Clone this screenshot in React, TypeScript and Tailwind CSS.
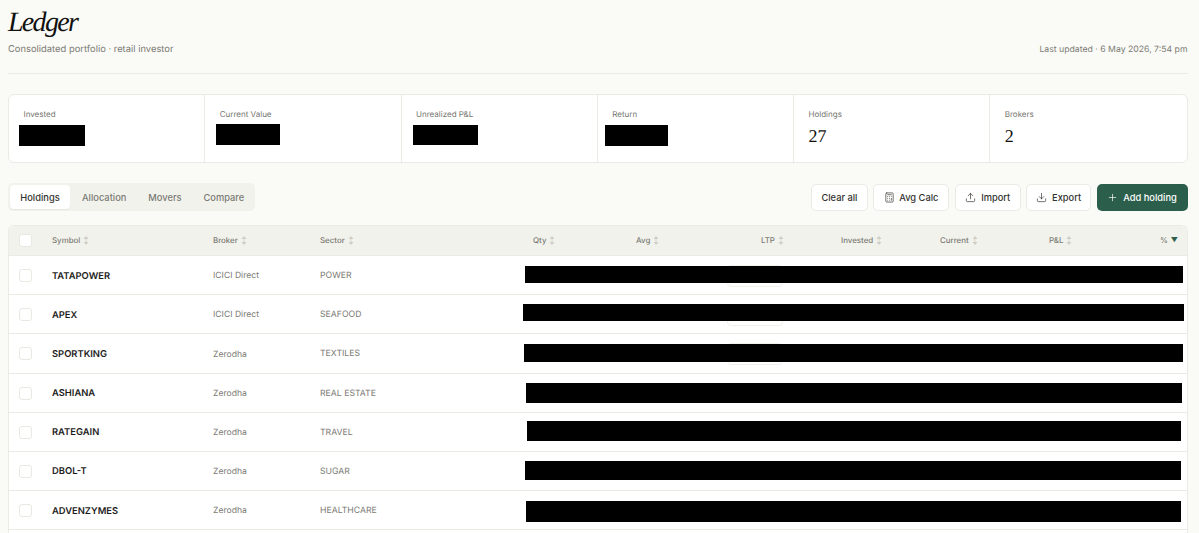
import { Calculator, Download, Plus, Upload } from "lucide-react";

const stats = [
  { label: "Invested", bar: "ml-[-4.5px] mt-[5px] w-[66px] h-[21px]" },
  { label: "Current Value", bar: "ml-[-4px] mt-[4px] w-[64px] h-[21px]" },
  { label: "Unrealized P&L", bar: "ml-[-3.5px] mt-[5px] w-[65px] h-[20px]" },
  { label: "Return", bar: "ml-[-7.5px] mt-[5px] w-[63px] h-[21px]" },
];

const columns = [
  { label: "Symbol", width: "w-[161px]" },
  { label: "Broker", width: "w-[107px]" },
  { label: "Sector", width: "w-[213px]" },
  { label: "Qty", width: "w-[103px]" },
  { label: "Avg", width: "w-[125px]" },
  { label: "LTP", width: "w-[80px]" },
  { label: "Invested", width: "w-[99px]" },
  { label: "Current", width: "w-[109px]" },
  { label: "P&L", width: "w-[90px]" },
];

const rows = [
  { symbol: "TATAPOWER", broker: "ICICI Direct", sector: "POWER", pill: true, bar: "ml-[-8px] w-[658px] h-[17px] mt-[-4px]" },
  { symbol: "APEX", broker: "ICICI Direct", sector: "SEAFOOD", pill: true, bar: "ml-[-10px] w-[661px] h-[17px] mt-[-6px]" },
  { symbol: "SPORTKING", broker: "Zerodha", sector: "TEXTILES", pill: true, bar: "ml-[-9px] w-[659px] h-[18px] mt-[-4px]" },
  { symbol: "ASHIANA", broker: "Zerodha", sector: "REAL ESTATE", pill: false, bar: "ml-[-7px] w-[656px] h-[20px] mt-[-2px]" },
  { symbol: "RATEGAIN", broker: "Zerodha", sector: "TRAVEL", pill: false, bar: "ml-[-6px] w-[654px] h-[20px] mt-[-5px]" },
  { symbol: "DBOL-T", broker: "Zerodha", sector: "SUGAR", pill: false, bar: "ml-[-8px] w-[656px] h-[19px] mt-[-4px]" },
  { symbol: "ADVENZYMES", broker: "Zerodha", sector: "HEALTHCARE", pill: false, bar: "ml-[-7px] w-[655px] h-[21px]" },
];

const tabs = ["Allocation", "Movers", "Compare"];

function Checkbox() {
  return <span className="block w-[13px] h-[13px] rounded-[3px] border border-[#e9e9e3] bg-white" />;
}

function SortIcon() {
  return (
    <svg width="6" height="9" viewBox="0 0 6 9" className="text-[#cfcfc8]" fill="currentColor">
      <path d="M3 0 L5.5 3 H0.5 Z" />
      <path d="M3 9 L0.5 6 H5.5 Z" />
      <rect x="2.6" y="2.5" width="0.8" height="4" />
    </svg>
  );
}

export default function App() {
  return (
    <div className="h-[533px] overflow-hidden bg-[#fafaf6] pl-[8px] pr-[11.5px] font-['Inter',sans-serif] text-[#1c1c1a] antialiased [text-rendering:geometricPrecision]">
      <header className="flex items-end justify-between border-b border-[#ebebe5] h-[74px] pb-[16px]">
        <div>
          <h1 className="font-['Liberation_Serif',serif] italic text-[28px] leading-[32px] tracking-[-1.7px] text-[#111110]">Ledger</h1>
          <p className="mt-[4px] text-[9.4px] leading-[14px] text-[#7b7b75]">Consolidated portfolio · retail investor</p>
        </div>
        <p className="text-[8.7px] leading-[14px] text-[#7b7b75]">Last updated · 6 May 2026, 7:54 pm</p>
      </header>

      <section className="mt-[20px] grid grid-cols-6 h-[69px] rounded-[6px] border border-[#ebebe5] bg-white">
        {stats.map((s) => (
          <div key={s.label} className="border-r border-[#ebebe5] pl-[14.5px] pt-[13px]">
            <p className="text-[8px] leading-[12px] text-[#75756f]">{s.label}</p>
            <div className={`bg-black ${s.bar}`} />
          </div>
        ))}
        <div className="border-r border-[#ebebe5] pl-[14.5px] pt-[13px]">
          <p className="text-[8px] leading-[12px] text-[#75756f]">Holdings</p>
          <p className="mt-[4px] font-['Liberation_Serif',serif] text-[18px] leading-[24px] text-[#111110]">27</p>
        </div>
        <div className="pl-[14.5px] pt-[13px]">
          <p className="text-[8px] leading-[12px] text-[#75756f]">Brokers</p>
          <p className="mt-[4px] font-['Liberation_Serif',serif] text-[18px] leading-[24px] text-[#111110]">2</p>
        </div>
      </section>

      <section className="mt-[20px] flex items-center justify-between">
        <div className="flex h-[28px] items-center rounded-[5px] bg-[#f2f2ec] pl-[2px] text-[9.3px]">
          <button type="button" className="mr-[1px] h-[24px] w-[60px] rounded-[4px] bg-white pt-[1px] font-medium text-[#33332f] shadow-[0_1px_1px_rgba(0,0,0,0.05)]">Holdings</button>
          {tabs.map((t) => (
            <button key={t} type="button" className="h-[24px] px-[11px] pt-[1px] font-medium text-[#7b7b75]">{t}</button>
          ))}
        </div>
        <div className="flex items-center gap-[5.4px] text-[9.3px] font-medium text-[#33332f]">
          <button type="button" className="h-[27px] w-[57px] rounded-[5px] border border-[#ebebe5] bg-white pt-[1px]">Clear all</button>
          <button type="button" className="flex h-[27px] w-[76px] items-center justify-center gap-[4px] rounded-[5px] border border-[#ebebe5] bg-white pt-[1px]">
            <Calculator size={11} strokeWidth={1.5} />Avg Calc
          </button>
          <button type="button" className="flex h-[27px] w-[66px] items-center justify-center gap-[5px] rounded-[5px] border border-[#ebebe5] bg-white pt-[1px]">
            <Upload size={11} strokeWidth={1.5} />Import
          </button>
          <button type="button" className="flex h-[27px] w-[65px] items-center justify-center gap-[5px] rounded-[5px] border border-[#ebebe5] bg-white pt-[1px]">
            <Download size={11} strokeWidth={1.5} />Export
          </button>
          <button type="button" className="flex h-[27px] w-[91px] items-center justify-center gap-[5px] rounded-[5px] bg-[#2c5f4b] pt-[1px] text-white">
            <Plus size={11} strokeWidth={1.5} />Add holding
          </button>
        </div>
      </section>

      <section className="mt-[14px] rounded-t-[6px] border-x border-t border-[#ebebe5] bg-white">
        <div className="flex h-[30px] items-center rounded-t-[6px] border-b border-[#ebebe5] bg-[#f2f2ec] pl-[10px] text-[7.9px] font-medium text-[#7b7b75]">
          <div className="w-[33px]"><Checkbox /></div>
          {columns.map((c) => (
            <div key={c.label} className={`flex items-center gap-[3px] ${c.width}`}>
              {c.label}
              <SortIcon />
            </div>
          ))}
          <div className="flex items-center gap-[3px] pl-[21px]">
            %
            <span className="text-[7px] text-[#2c5f4b]">▼</span>
          </div>
        </div>
        {rows.map((r) => (
          <div key={r.symbol} className="relative flex h-[39.2px] items-center border-b border-[#ebebe5] pl-[10px] pt-[3px]">
            {r.pill && <span className="absolute left-[718px] top-[9px] h-[22px] w-[56px] rounded-[4px] border border-[#f1f1ec]" />}
            <div className="mt-[-2px] w-[33px]"><Checkbox /></div>
            <div className="w-[161px] text-[9.4px] font-semibold text-[#1c1c1a]">{r.symbol}</div>
            <div className="w-[107px] text-[8.6px] text-[#7b7b75]">{r.broker}</div>
            <div className="w-[213px] text-[8.7px] text-[#7b7b75]">{r.sector}</div>
            <div className={`relative bg-black ${r.bar}`} />
          </div>
        ))}
        <div className="h-[39px]" />
      </section>
    </div>
  );
}
